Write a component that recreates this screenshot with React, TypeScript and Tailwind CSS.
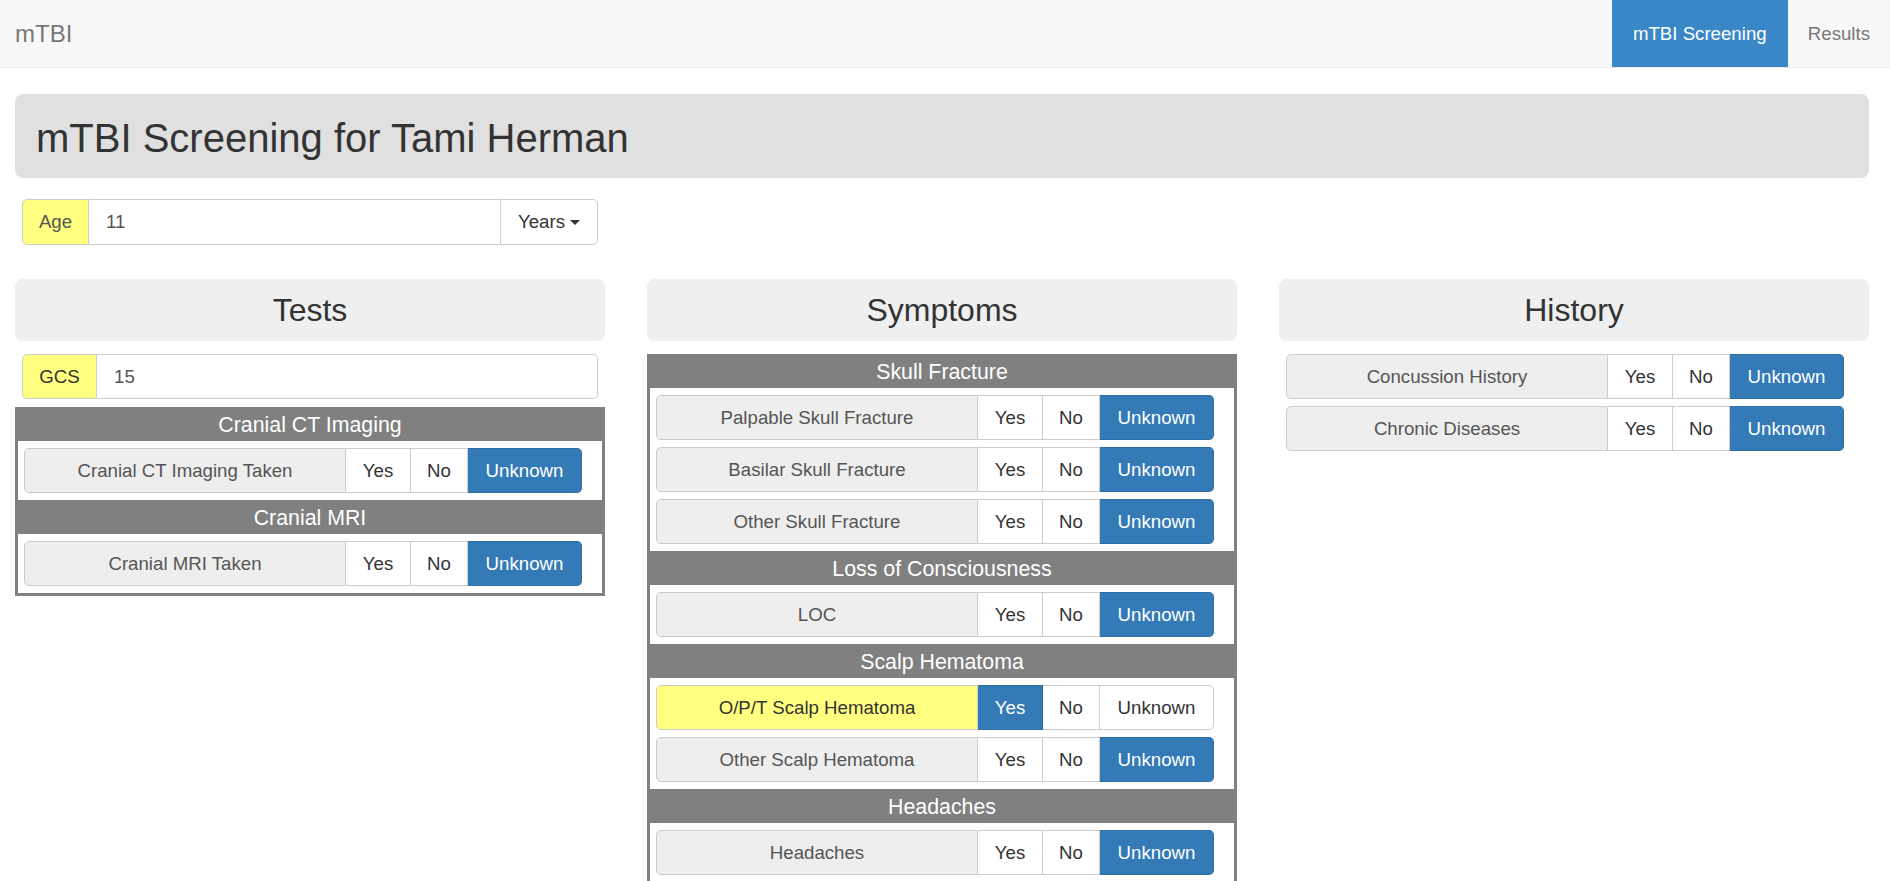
import React from "react";

type Val = "yes" | "no" | "unknown";

function Choice({
  text,
  active,
  width,
  last,
}: {
  text: string;
  active: boolean;
  width: string;
  last?: boolean;
}) {
  return (
    <div
      className={`flex items-center justify-center border-y border-r ${width} ${
        last ? "rounded-r-[5px]" : ""
      } ${
        active
          ? "border-[#2e6da4] bg-[#337ab7] text-white"
          : "border-[#cccccc] bg-white text-[#333333]"
      }`}
    >
      {text}
    </div>
  );
}

function Row({
  label,
  value = "unknown",
  highlight,
}: {
  label: string;
  value?: Val;
  highlight?: boolean;
}) {
  return (
    <div className="flex h-[45px] w-[558px] text-[18.67px]">
      <div
        className={`flex w-[322px] items-center justify-center rounded-l-[5px] border border-[#cccccc] ${
          highlight ? "bg-[#ffff80] text-[#333333]" : "bg-[#eeeeee] text-[#555555]"
        }`}
      >
        {label}
      </div>
      <Choice text="Yes" active={value === "yes"} width="w-[65px]" />
      <Choice text="No" active={value === "no"} width="w-[57px]" />
      <Choice text="Unknown" active={value === "unknown"} width="w-[114px]" last />
    </div>
  );
}

function Section({
  title,
  children,
}: {
  title: string;
  children: React.ReactNode;
}) {
  return (
    <>
      <div className="flex h-[34px] items-center justify-center pt-[3px] text-[21.33px] text-white">
        {title}
      </div>
      <div className="flex flex-col gap-[7px] bg-white px-[6px] py-[7px]">{children}</div>
    </>
  );
}

function SectionBox({ children }: { children: React.ReactNode }) {
  return <div className="bg-[#808080] px-[3px] pb-[3px]">{children}</div>;
}

function PanelHead({ title }: { title: string }) {
  return (
    <div className="flex h-[62px] items-center justify-center rounded-[8px] bg-[#efefef] text-[32px] text-[#333333]">
      {title}
    </div>
  );
}

export default function App() {
  return (
    <div
      className="min-h-screen bg-white text-[18.67px] text-[#333333]"
      style={{ fontFamily: '"Liberation Sans", Arial, Helvetica, sans-serif' }}
    >
      {/* Navbar */}
      <div className="flex h-[68px] items-center justify-between border-b border-[#e7e7e7] bg-[#f8f8f8]">
        <div className="pl-[15px] text-[24px] text-[#777777]">mTBI</div>
        <div className="flex h-full">
          <div className="flex h-[67px] w-[176px] items-center justify-center bg-[#3a87c8] text-white">
            mTBI Screening
          </div>
          <div className="flex h-[67px] items-center px-[20px] text-[#777777]">Results</div>
        </div>
      </div>

      <div className="pl-[15px] pr-[21px]">
        {/* Header */}
        <div className="mt-[26px] flex h-[84px] items-center rounded-[8px] bg-[#e0e0e0] px-[21px] pt-[3px]">
          <h2 className="text-[40px] leading-[1.1] text-[#333333]">
            mTBI Screening for Tami Herman
          </h2>
        </div>

        {/* Age */}
        <div className="ml-[7px] mt-[21px] flex h-[46px] w-[576px]">
          <div className="flex w-[67px] items-center justify-center rounded-l-[5px] border border-[#cccccc] bg-[#ffff80] text-[#555555]">
            Age
          </div>
          <div className="flex flex-1 items-center border-y border-[#cccccc] px-[17px] text-[#555555]">
            11
          </div>
          <div className="flex w-[98px] items-center justify-center rounded-r-[5px] border border-[#cccccc] bg-white text-[#333333]">
            Years
            <span className="ml-[5px] inline-block h-0 w-0 border-x-[5px] border-t-[5px] border-x-transparent border-t-[#333333]" />
          </div>
        </div>

        {/* Columns */}
        <div className="mt-[34px] grid grid-cols-3 gap-[42px]">
          {/* Tests */}
          <div>
            <PanelHead title="Tests" />
            <div className="ml-[7px] mt-[13px] flex h-[45px] w-[576px]">
              <div className="flex w-[75px] items-center justify-center rounded-l-[5px] border border-[#cccccc] bg-[#ffff80] text-[#333333]">
                GCS
              </div>
              <div className="flex flex-1 items-center rounded-r-[5px] border-y border-r border-[#cccccc] bg-white px-[17px] text-[#555555]">
                15
              </div>
            </div>
            <div className="mt-[8px]">
              <SectionBox>
                <Section title="Cranial CT Imaging">
                  <Row label="Cranial CT Imaging Taken" />
                </Section>
                <Section title="Cranial MRI">
                  <Row label="Cranial MRI Taken" />
                </Section>
              </SectionBox>
            </div>
          </div>

          {/* Symptoms */}
          <div>
            <PanelHead title="Symptoms" />
            <div className="mt-[13px]">
              <SectionBox>
                <Section title="Skull Fracture">
                  <Row label="Palpable Skull Fracture" />
                  <Row label="Basilar Skull Fracture" />
                  <Row label="Other Skull Fracture" />
                </Section>
                <Section title="Loss of Consciousness">
                  <Row label="LOC" />
                </Section>
                <Section title="Scalp Hematoma">
                  <Row label="O/P/T Scalp Hematoma" value="yes" highlight />
                  <Row label="Other Scalp Hematoma" />
                </Section>
                <Section title="Headaches">
                  <Row label="Headaches" />
                </Section>
              </SectionBox>
            </div>
          </div>

          {/* History */}
          <div>
            <PanelHead title="History" />
            <div className="ml-[7px] mt-[13px] flex flex-col gap-[7px]">
              <Row label="Concussion History" />
              <Row label="Chronic Diseases" />
            </div>
          </div>
        </div>
      </div>
    </div>
  );
}
